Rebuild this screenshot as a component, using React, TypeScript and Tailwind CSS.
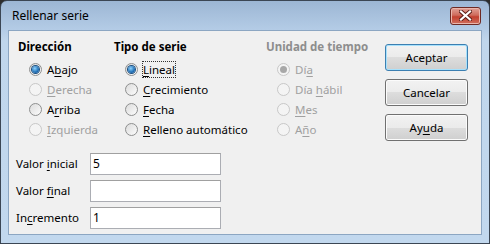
import React from 'react';

const font = { fontFamily: '"Noto Sans", "Segoe UI", Arial, sans-serif' };

// Radio estilo Windows 7
const Radio: React.FC<{ checked?: boolean; disabled?: boolean }> = ({ checked, disabled }) => (
  <span
    className={`relative flex h-[13px] w-[13px] shrink-0 items-center justify-center rounded-full border ${
      disabled ? 'border-[#c8c8c8] bg-[#f4f4f4]' : 'border-[#8e8f8f] bg-gradient-to-br from-[#dcdcdc] to-[#fbfbfb]'
    }`}
  >
    {checked && (
      <span
        className={`h-[7px] w-[7px] rounded-full ${
          disabled
            ? 'bg-[#a8a8a8]'
            : 'bg-[radial-gradient(circle_at_40%_35%,#8fd3ff,#1f6fb5_60%,#0d4a8c)] shadow-[0_0_0_1px_#1b4f80]'
        }`}
      />
    )}
  </span>
);

type Opt = { pre: string; u: string; post: string; checked?: boolean; disabled?: boolean; focus?: boolean };

const RadioRow: React.FC<Opt> = ({ pre, u, post, checked, disabled, focus }) => (
  <div className="flex h-[20px] items-center gap-[5px]">
    <Radio checked={checked} disabled={disabled} />
    <span
      className={`leading-[15px] ${disabled ? 'text-[#a0a0a0]' : 'text-black'} ${
        focus ? 'outline-1 outline-dotted outline-[#333] outline-offset-0' : ''
      }`}
    >
      {pre}
      <span className="underline underline-offset-2">{u}</span>
      {post}
    </span>
  </div>
);

const Btn: React.FC<{ pre: string; u?: string; post?: string; primary?: boolean }> = ({ pre, u, post, primary }) => (
  <div
    className={`flex h-[27px] w-[83px] items-center justify-center rounded-[3px] border ${
      primary ? 'border-[#3c7fb1] shadow-[inset_0_0_0_1px_#a7e1fc]' : 'border-[#707070] shadow-[inset_0_0_0_1px_#fbfbfb]'
    } bg-[linear-gradient(#f2f2f2,#ebebeb_50%,#dddddd_50%,#cfcfcf)] text-black`}
  >
    {pre}
    {u && <span className="underline underline-offset-2">{u}</span>}
    {post}
  </div>
);

const Field: React.FC<{ pre: string; u: string; post: string; value: string }> = ({ pre, u, post, value }) => (
  <div className="flex h-[27px] items-center">
    <span className="w-[74px]">
      {pre}
      <span className="underline underline-offset-2">{u}</span>
      {post}
    </span>
    <div className="flex h-[22px] w-[131px] items-center border border-[#abadb3] border-t-[#a0a0a0] bg-white pl-[2px] text-[12px]">
      {value}
    </div>
  </div>
);

const App: React.FC = () => {
  return (
    <div className="h-[244px] w-[490px] bg-[#2d2d2d] text-[11.5px]" style={font}>
      <div className="flex h-[244px] w-[490px] flex-col rounded-t-[7px] border border-[#3b4654] bg-[linear-gradient(#9cb6d4,#b4cce6_29px,#c0d6ec_40px,#c2d8ee)] px-[7px] pb-[8px]">
        {/* barra de título */}
        <div className="flex h-[29px] shrink-0 items-center justify-between">
          <span className="pl-[4px] pt-[1px] text-[12px] text-black">Rellenar serie</span>
          <div className="mr-[1px] flex h-[18px] w-[31px] items-center justify-center rounded-[3px] border border-[#6e2a24] bg-[linear-gradient(#e0a197,#cf6b5c_45%,#c2402f_55%,#d0705f)] shadow-[inset_0_0_0_1px_#eab6ac]">
            <svg width="13" height="11" viewBox="0 0 13 11">
              <path d="M2 1.5 L11 9.5 M11 1.5 L2 9.5" stroke="#5a1c16" strokeWidth="4" strokeLinecap="square" />
              <path d="M2 1.5 L11 9.5 M11 1.5 L2 9.5" stroke="#ffffff" strokeWidth="2.2" strokeLinecap="square" />
            </svg>
          </div>
        </div>

        {/* área de cliente */}
        <div className="flex flex-1 flex-col border border-[#8ca6c2] bg-[#f0f0f0] pl-[9px] pt-[7px]">
          <div className="flex">
            <div className="w-[96px]">
              <div className="h-[17px] font-bold leading-[17px]">Dirección</div>
              <div className="ml-[11px] mt-[4px] flex flex-col">
                <RadioRow pre="A" u="b" post="ajo" checked />
                <RadioRow pre="" u="D" post="erecha" disabled />
                <RadioRow pre="A" u="r" post="riba" />
                <RadioRow pre="" u="I" post="zquierda" disabled />
              </div>
            </div>
            <div className="w-[152px]">
              <div className="h-[17px] font-bold leading-[17px]">Tipo de serie</div>
              <div className="ml-[11px] mt-[4px] flex flex-col">
                <RadioRow pre="" u="L" post="ineal" checked focus />
                <RadioRow pre="" u="C" post="recimiento" />
                <RadioRow pre="" u="F" post="echa" />
                <RadioRow pre="" u="R" post="elleno automático" />
              </div>
            </div>
            <div className="w-[119px]">
              <div className="h-[17px] font-bold leading-[17px] text-[#8d8d8d]">Unidad de tiempo</div>
              <div className="ml-[11px] mt-[4px] flex flex-col">
                <RadioRow pre="Dí" u="a" post="" checked disabled />
                <RadioRow pre="Día " u="h" post="ábil" disabled />
                <RadioRow pre="" u="M" post="es" disabled />
                <RadioRow pre="A" u="ñ" post="o" disabled />
              </div>
            </div>
            <div className="mt-[6px] flex flex-col gap-[8px]">
              <Btn pre="Aceptar" primary />
              <Btn pre="Cancelar" />
              <Btn pre="Ay" u="u" post="da" />
            </div>
          </div>

          <div className="ml-[-2px] mt-[9px] flex flex-col">
            <Field pre="Valor " u="i" post="nicial" value="5" />
            <Field pre="Valor " u="f" post="inal" value="" />
            <Field pre="In" u="c" post="remento" value="1" />
          </div>
        </div>
      </div>
    </div>
  );
};

export default App;
